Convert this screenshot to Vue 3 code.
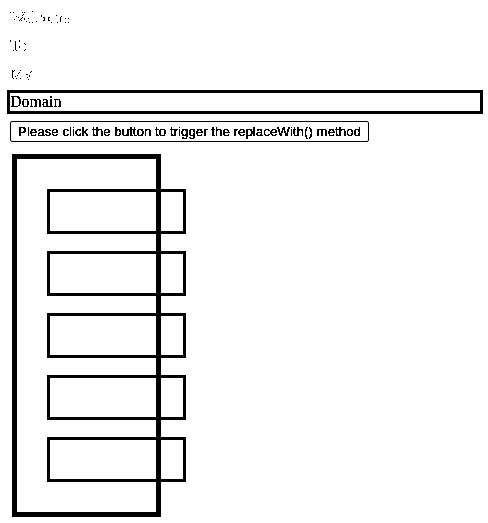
<script setup>
const faint = ['Welcome', 'To', 'My']
</script>

<template>
  <main class="page">
    <svg class="defs" width="0" height="0" aria-hidden="true">
      <filter id="crisp" x="0" y="0" width="1" height="1">
        <feComponentTransfer><feFuncA type="discrete" tableValues="0 0 0 1 1 1 1 1 1 1" /></feComponentTransfer>
      </filter>
      <filter id="bold-crisp" x="0" y="0" width="1" height="1">
        <feComponentTransfer><feFuncA type="discrete" tableValues="0 0 1 1 1 1 1 1 1 1" /></feComponentTransfer>
      </filter>
      <filter id="speckle" x="0" y="0" width="1" height="1">
        <feComponentTransfer><feFuncA type="discrete" tableValues="0 0 0 0 0 1 1 0 0 0" /></feComponentTransfer>
      </filter>
    </svg>
    <p v-for="word in faint" :key="word" class="row faint"><span>{{ word }}</span></p>
    <p class="row boxed"><span>Domain</span></p>
    <button class="trigger"><span>Please click the button to trigger the replaceWith() method</span></button>
    <section class="frame">
      <div v-for="n in 5" :key="n" class="cell"></div>
    </section>
  </main>
</template>

<style>
body { background: #fff; overflow: hidden; }
</style>

<style scoped>
.page { padding: 6px 5px 0 7px; color: #000; font: 16px/18px "Liberation Serif", serif; }
.defs { position: absolute; }
.row { box-sizing: border-box; height: 24px; margin: 0 0 4px; border: 3px solid transparent; }
.row span { display: block; filter: url(#crisp); }
.faint span { filter: url(#speckle); }
.boxed { border-color: #000; }
.trigger {
  display: block; box-sizing: border-box; width: 359px; height: 21px; margin: 7px 0 0 3px; padding: 0;
  border: 1px solid #000; border-radius: 2px; background: #fff; color: #000;
  font: 13.333px/19px "Liberation Sans", Arial, sans-serif; text-align: center;
}
.trigger span { display: block; filter: url(#bold-crisp); }
.frame {
  box-sizing: border-box; width: 149px; height: 363px; margin: 12px 0 0 5px; padding: 30px;
  border: 5px solid #000; display: flex; flex-direction: column; gap: 17px;
}
.cell { box-sizing: border-box; flex: none; width: 139px; height: 45px; border: 3px solid #000; }
</style>
